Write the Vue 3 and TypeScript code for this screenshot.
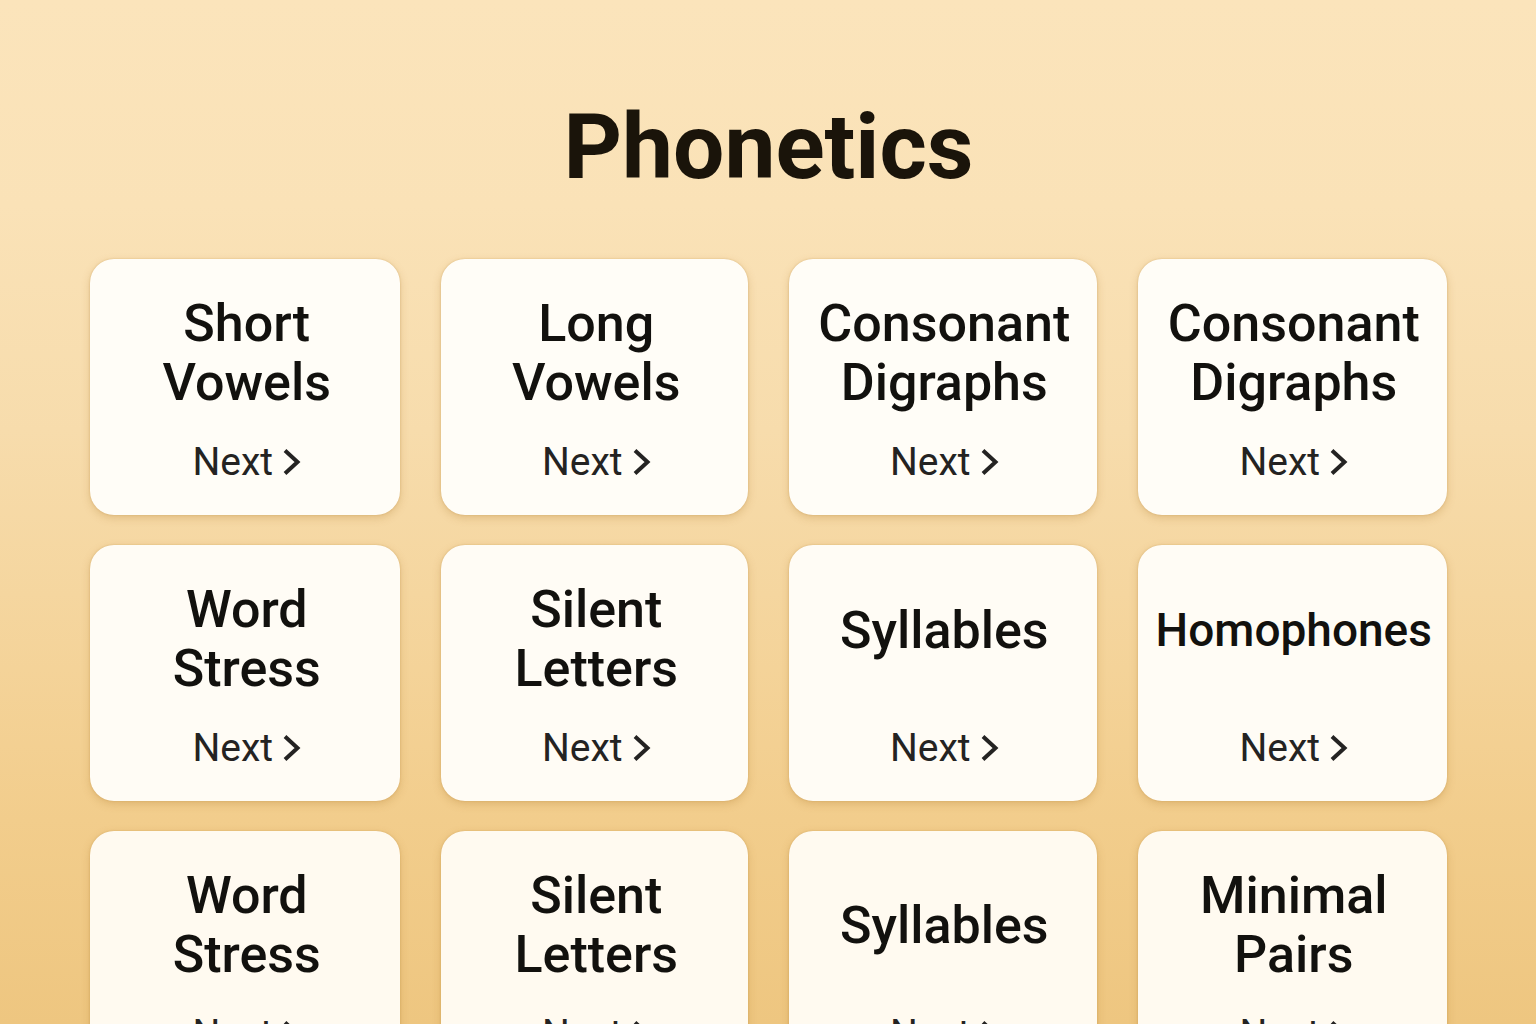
<script setup lang="ts">
interface Topic {
  id: number
  lines: string[]
  variant?: 'raised' | 'compact'
}

const topics: Topic[] = [
  { id: 1, lines: ['Short', 'Vowels'] },
  { id: 2, lines: ['Long', 'Vowels'] },
  { id: 3, lines: ['Consonant', 'Digraphs'] },
  { id: 4, lines: ['Consonant', 'Digraphs'] },
  { id: 5, lines: ['Word', 'Stress'] },
  { id: 6, lines: ['Silent', 'Letters'] },
  { id: 7, lines: ['Syllables'], variant: 'raised' },
  { id: 8, lines: ['Homophones'], variant: 'compact' },
  { id: 9, lines: ['Word', 'Stress'] },
  { id: 10, lines: ['Silent', 'Letters'] },
  { id: 11, lines: ['Syllables'] },
  { id: 12, lines: ['Minimal', 'Pairs'] },
]
</script>

<template>
  <main class="page">
    <h1 class="heading">Phonetics</h1>
    <section class="grid" aria-label="Topics">
      <article v-for="topic in topics" :key="topic.id" class="card">
        <h2 class="title" :class="topic.variant">
          <span v-for="line in topic.lines" :key="line" class="line">{{ line }}</span>
        </h2>
        <button type="button" class="next">
          Next
          <svg class="chevron" viewBox="0 0 18 26" aria-hidden="true">
            <path d="M2 1.5 L14.5 13 L2 24.5" />
          </svg>
        </button>
      </article>
    </section>
  </main>
</template>

<style>
body {
  margin: 0;
  background: linear-gradient(
      180deg,
      #fbe4bb 0%,
      #fae2b7 20%,
      #f7dcac 42%,
      #f5d69f 58%,
      #f2cd8c 80%,
      #eec680 100%
    )
    fixed;
}
</style>

<style scoped>
.page {
  box-sizing: border-box;
  min-height: 100vh;
  padding: 94px 89px 30px 90px;
  font-family: Roboto, 'Liberation Sans', sans-serif;
}

.heading {
  margin: 0 0 59px;
  font-size: 91px;
  line-height: 106px;
  font-weight: 700;
  text-align: center;
  color: #1a140a;
}

.grid {
  display: grid;
  grid-template-columns: 311fr 307fr 308fr 310fr;
  gap: 30px 41px;
}

.card {
  display: flex;
  flex-direction: column;
  align-items: center;
  gap: 27px;
  padding: 35px 0 30px 3px;
  border-radius: 24px;
  background: #fffcf5;
  box-shadow:
    0 0 2px rgba(186, 132, 50, 0.4),
    0 3px 9px rgba(166, 112, 34, 0.26);
}

.card:nth-child(-n + 4) {
  background: #fffdf7;
}

.card:nth-child(n + 9) {
  background: #fffaf0;
}

.title {
  box-sizing: border-box;
  display: flex;
  flex-direction: column;
  justify-content: center;
  height: 118px;
  margin: 0;
  font-size: 52px;
  line-height: 59px;
  font-weight: 500;
  text-align: center;
  color: #12110e;
}

.raised,
.compact {
  padding-bottom: 18px;
}

.compact {
  font-size: 46px;
}

.line {
  display: block;
}

.next {
  display: flex;
  align-items: center;
  gap: 10px;
  margin: 0;
  padding: 0;
  border: 0;
  background: none;
  font-family: inherit;
  font-size: 39px;
  line-height: 46px;
  font-weight: 400;
  color: #242322;
  cursor: pointer;
}

.chevron {
  width: 18px;
  height: 26px;
  fill: none;
  stroke: currentColor;
  stroke-width: 4;
}
</style>
